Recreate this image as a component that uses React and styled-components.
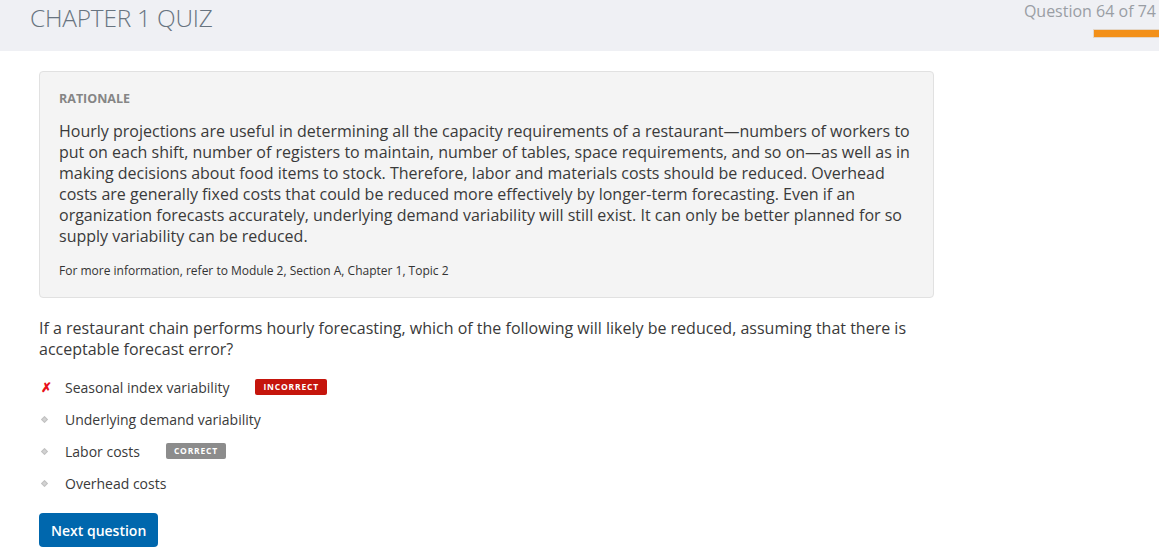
import styled, { createGlobalStyle } from "styled-components";

const GlobalStyle = createGlobalStyle`
    html, body {
        margin: 0;
        padding: 0;
        background: #ffffff;
        font-family: "Open Sans", "Liberation Sans", sans-serif;
    }
`;

const Header = styled.header`
    height: 51px;
    background: #eff0f4;
    display: flex;
    justify-content: space-between;
    align-items: flex-start;
    padding-left: 30px;
`;

const Title = styled.h1`
    margin: 0;
    padding-top: 2px;
    font-size: 24.4px;
    font-weight: 300;
    color: #687480;
    letter-spacing: -0.2px;
    line-height: 32px;
`;

const Progress = styled.div`
    display: flex;
    flex-direction: column;
    align-items: flex-end;
`;

const Counter = styled.span`
    font-size: 16px;
    color: #9a9ea4;
    line-height: 22px;
    padding-right: 3px;
`;

const Bar = styled.span`
    margin-top: 7px;
    width: 65px;
    height: 7px;
    background: #f39019;
    border: 1px solid #e4d6c6;
    border-right: none;
    border-radius: 1px 0 0 1px;
`;

const Main = styled.main`
    padding: 20px 39px 0;
    width: 895px;
`;

const Rationale = styled.section`
    background: #f4f4f4;
    border: 1px solid #e1e1e1;
    border-radius: 4px;
    padding: 18px 19px 17px;
`;

const Label = styled.h2`
    margin: 0;
    font-size: 12.5px;
    font-weight: 700;
    color: #858585;
    line-height: 18px;
`;

const Body = styled.p`
    margin: 13px 0 0;
    font-size: 16px;
    line-height: 21px;
    color: #3a3a3a;
    width: 855px;
`;

const Source = styled.p`
    margin: 15px 0 0;
    font-size: 12px;
    line-height: 18px;
    color: #333;
`;

const Question = styled.p`
    margin: 20px 0 0;
    font-size: 16px;
    line-height: 21px;
    color: #3a3a3a;
`;

const Options = styled.ul`
    list-style: none;
    margin: 11px 0 0;
    padding: 0;
`;

const Option = styled.li`
    display: flex;
    align-items: center;
    height: 32px;
    font-size: 14px;
    color: #3a3a3a;
`;

const Mark = styled.span`
    width: 26px;
    display: flex;
    align-items: center;
    padding-left: 2px;
    box-sizing: border-box;
`;

const Cross = styled.span`
    color: #e8101a;
    font-size: 13px;
    font-weight: 700;
    line-height: 1;
`;

const Dot = styled.span`
    width: 5px;
    height: 5px;
    margin-left: 1px;
    background: #d2d2d2;
    border: 1px solid #c2c2c2;
    box-sizing: border-box;
    transform: rotate(45deg);
`;

const Badge = styled.span`
    margin-left: ${(p) => p.$gap}px;
    background: ${(p) => (p.$bad ? "#c5150c" : "#8c8c8c")};
    color: #fff;
    font-size: 8.5px;
    font-weight: 700;
    letter-spacing: 0.8px;
    padding: 0 8px;
    height: 16px;
    line-height: 16px;
    border-radius: 2px;
`;

const NextButton = styled.button`
    margin-top: 14px;
    background: #0067ad;
    color: #fff;
    border: none;
    border-radius: 4px;
    font-family: inherit;
    font-size: 14px;
    font-weight: 600;
    height: 34px;
    padding: 0 12px;
`;

const options = [
    { text: "Seasonal index variability", wrong: true, badge: "INCORRECT", gap: 26 },
    { text: "Underlying demand variability" },
    { text: "Labor costs", badge: "CORRECT", gap: 26 },
    { text: "Overhead costs" },
];

export default function App() {
    return (
        <>
            <GlobalStyle />
            <Header>
                <Title>CHAPTER 1 QUIZ</Title>
                <Progress>
                    <Counter>Question 64 of 74</Counter>
                    <Bar />
                </Progress>
            </Header>
            <Main>
                <Rationale>
                    <Label>RATIONALE</Label>
                    <Body>
                        Hourly projections are useful in determining all the capacity requirements of a
                        restaurant—numbers of workers to put on each shift, number of registers to maintain,
                        number of tables, space requirements, and so on—as well as in making decisions about
                        food items to stock. Therefore, labor and materials costs should be reduced. Overhead
                        costs are generally fixed costs that could be reduced more effectively by longer-term
                        forecasting. Even if an organization forecasts accurately, underlying demand
                        variability will still exist. It can only be better planned for so supply variability
                        can be reduced.
                    </Body>
                    <Source>For more information, refer to Module 2, Section A, Chapter 1, Topic 2</Source>
                </Rationale>
                <Question>
                    If a restaurant chain performs hourly forecasting, which of the following will likely be
                    reduced, assuming that there is acceptable forecast error?
                </Question>
                <Options>
                    {options.map((o) => (
                        <Option key={o.text}>
                            <Mark>{o.wrong ? <Cross>✗</Cross> : <Dot />}</Mark>
                            {o.text}
                            {o.badge && (
                                <Badge $bad={o.wrong} $gap={o.gap}>
                                    {o.badge}
                                </Badge>
                            )}
                        </Option>
                    ))}
                </Options>
                <NextButton>Next question</NextButton>
            </Main>
        </>
    );
}
